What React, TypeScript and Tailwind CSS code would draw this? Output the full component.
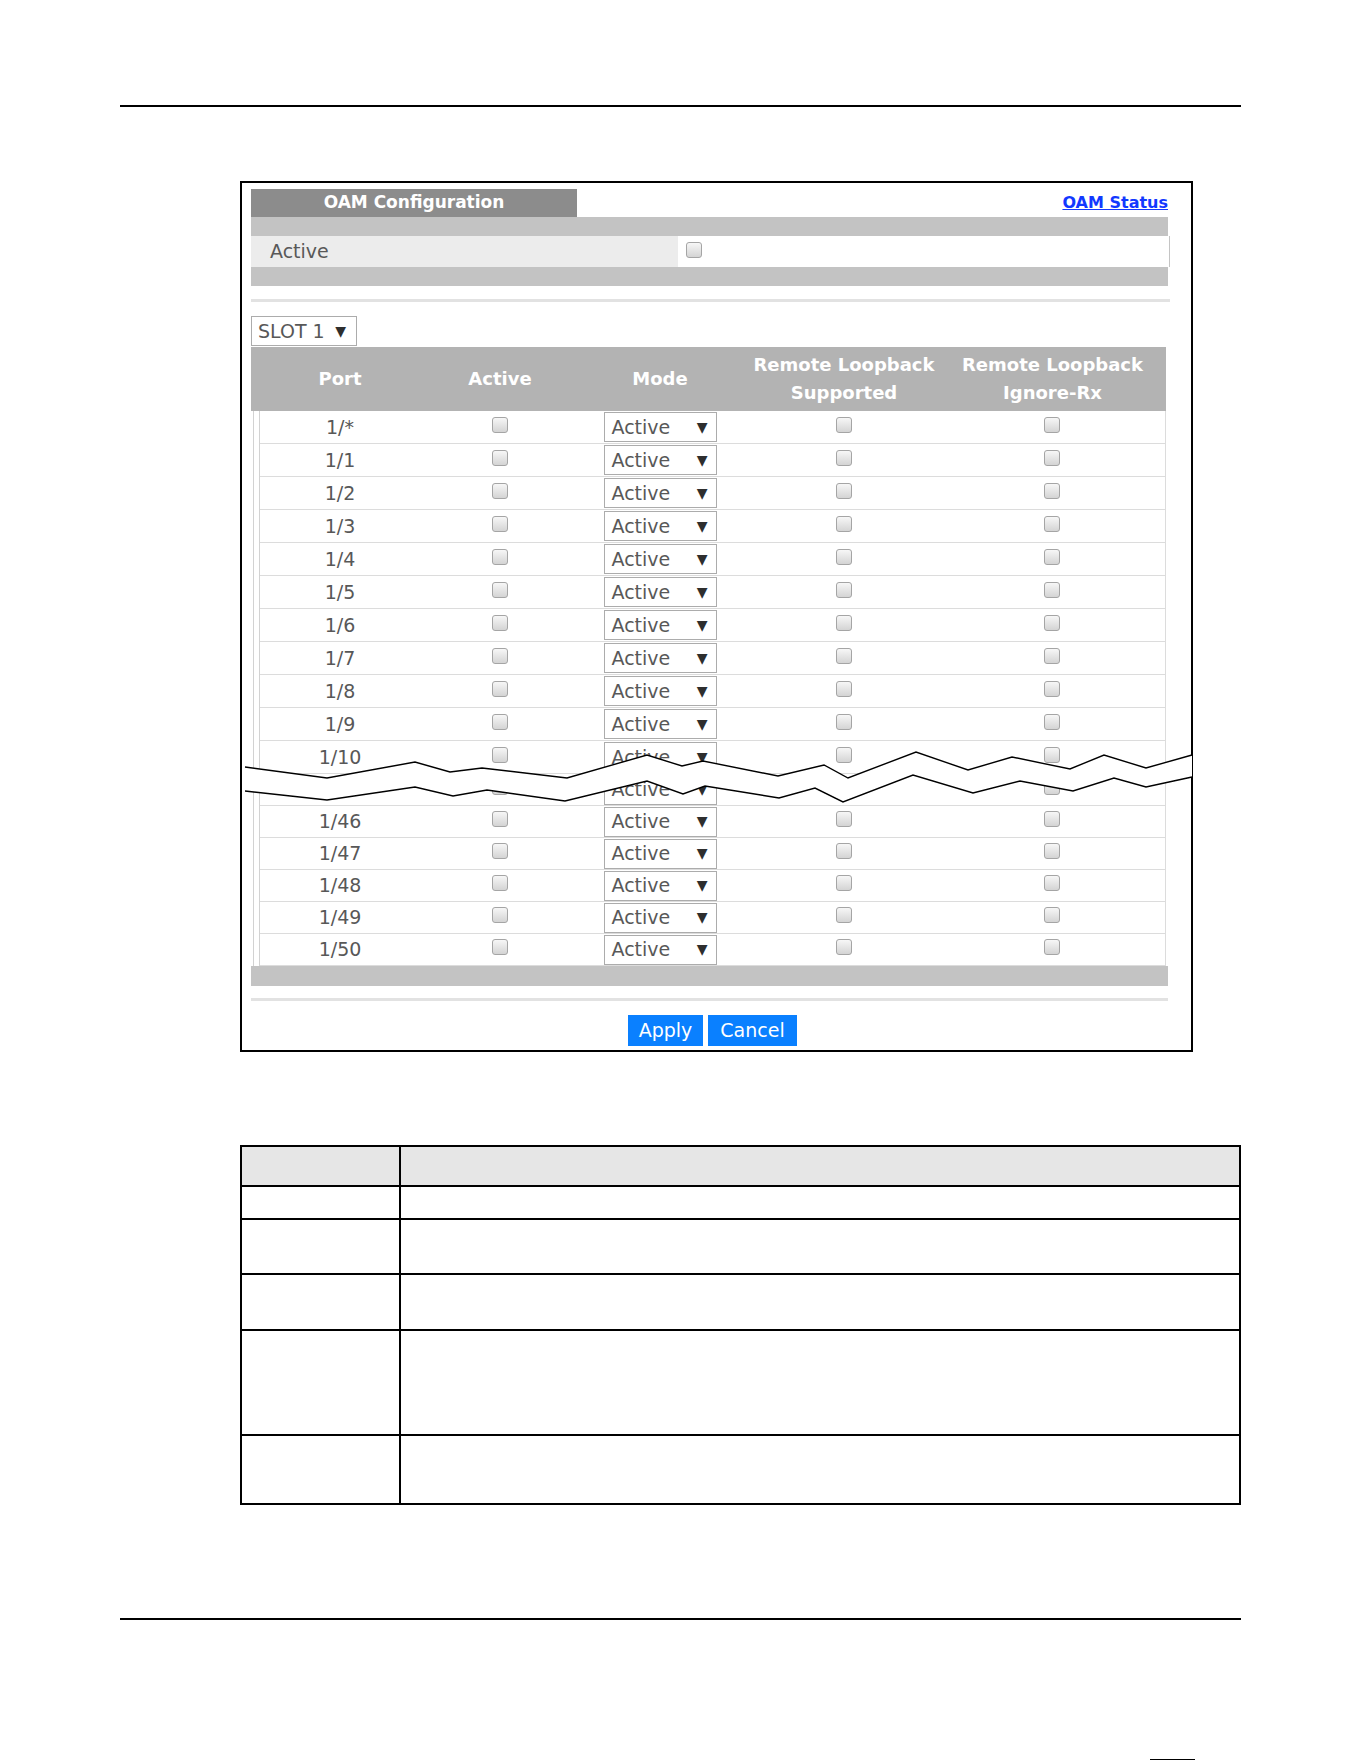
import React from 'react';

const ports = ['1/*', '1/1', '1/2', '1/3', '1/4', '1/5', '1/6', '1/7', '1/8', '1/9', '1/10', '1/45', '1/46', '1/47', '1/48', '1/49', '1/50'];

// break marker drawn across the port list
const upper: [number, number][] = [
  [245, 767], [327, 778], [415, 762], [450, 772], [482, 768], [567, 778], [647, 755], [682, 766], [703, 761],
  [778, 776], [824, 765], [848, 778], [916, 752], [968, 770], [1012, 757], [1070, 769], [1104, 755], [1146, 768], [1192, 755],
];
const lower: [number, number][] = [
  [245, 791], [327, 800], [415, 787], [453, 796], [487, 790], [565, 801], [647, 781], [683, 794], [705, 786],
  [779, 798], [815, 788], [843, 802], [913, 775], [973, 793], [1020, 781], [1073, 791], [1114, 778], [1146, 787], [1192, 777],
];
const pts = (list: [number, number][]) => list.map(([x, y]) => `${x},${y}`).join(' ');

const CheckBox: React.FC<{ className?: string }> = ({ className = '' }) => (
  <span
    className={`block w-[16px] h-[16px] rounded-[3px] border border-[#a5a5a5] bg-gradient-to-b from-[#f7f7f7] to-[#d4d4d4] ${className}`}
  />
);

const ModeSelect: React.FC = () => (
  <div className="flex items-center justify-between w-[113px] h-[30px] border border-[#acacac] bg-white pl-[7px] pr-[8px]">
    <span>Active</span>
    <span className="text-[14px] text-[#2e2e2e]">▼</span>
  </div>
);

const PortRow: React.FC<{ port: string; tall: boolean }> = ({ port, tall }) => (
  <div className={`flex items-center border-b border-r border-[#dcdcdc] ${tall ? 'h-[33px]' : 'h-[32px]'}`}>
    <div className="w-[169px] pr-[9px] text-center">{port}</div>
    <div className="w-[142px] flex justify-center">
      <CheckBox className="mb-[5px]" />
    </div>
    <div className="w-[178px] flex justify-center">
      <ModeSelect />
    </div>
    <div className="w-[190px] flex justify-center">
      <CheckBox className="mb-[5px]" />
    </div>
    <div className="w-[226px] flex justify-center">
      <CheckBox className="mb-[5px]" />
    </div>
  </div>
);

export default function App() {
  return (
    <div className="relative w-[1361px] h-[1761px] bg-white pt-[105px] font-['DejaVu_Sans',sans-serif] text-[19px] text-[#585858]">
      <div className="ml-[120px] w-[1121px] h-[2px] bg-black" />

      {/* OAM configuration screen */}
      <div className="mt-[74px] ml-[240px] w-[953px] h-[871px] border-2 border-black pl-[9px] pt-[6px]">
        <div className="flex items-end justify-between w-[919px] h-[28px]">
          <div className="w-[326px] h-[28px] bg-[#8c8c8c] flex items-center justify-center text-white font-bold text-[17px]">
            OAM Configuration
          </div>
          <a href="#" className="mb-[2px] mr-[2px] text-[16px] font-bold text-[#1238ff] underline">
            OAM Status
          </a>
        </div>
        <div className="w-[917px] h-[19px] bg-[#c3c3c3]" />
        <div className="flex w-[919px] h-[31px]">
          <div className="w-[427px] bg-[#ececec] flex items-center pl-[19px]">Active</div>
          <div className="flex-1 flex items-center pl-[8px] border-r border-[#c4c4c4]">
            <CheckBox className="mb-[3px]" />
          </div>
        </div>
        <div className="w-[917px] h-[19px] bg-[#c3c3c3]" />
        <div className="mt-[13px] w-[919px] h-[3px] bg-[#e2e2e2]" />

        <div className="mt-[14px] flex items-center justify-between w-[106px] h-[30px] border border-[#acacac] pl-[6px] pr-[10px]">
          <span>SLOT 1</span>
          <span className="text-[14px] text-[#2e2e2e]">▼</span>
        </div>

        {/* port table */}
        <div className="mt-[1px] w-[915px] h-[64px] bg-[#b3b3b3] flex items-center text-white font-bold text-[18px] leading-[28px]">
          <div className="w-[178px] text-center">Port</div>
          <div className="w-[142px] text-center">Active</div>
          <div className="w-[178px] text-center">Mode</div>
          <div className="w-[190px] text-center whitespace-nowrap">
            Remote Loopback
            <br />
            Supported
          </div>
          <div className="w-[227px] text-center whitespace-nowrap">
            Remote Loopback
            <br />
            Ignore-Rx
          </div>
        </div>
        <div className="flex">
          <div className="ml-[2px] w-[6px] border-l border-[#d2d2d2]" />
          <div className="w-[907px] border-l border-[#d2d2d2]">
            {ports.map((p, i) => (
              <PortRow key={p} port={p} tall={i < 11} />
            ))}
          </div>
        </div>
        <div className="w-[917px] h-[20px] bg-[#c3c3c3]" />
        <div className="mt-[12px] w-[917px] h-[3px] bg-[#e2e2e2]" />

        <div className="mt-[14px] w-[919px] flex justify-center gap-[5px] pl-[4px]">
          <button className="w-[75px] h-[31px] bg-[#0a80ff] text-white text-[19px]">Apply</button>
          <button className="w-[89px] h-[31px] bg-[#0a80ff] text-white text-[19px]">Cancel</button>
        </div>
      </div>

      {/* field description table */}
      <div className="mt-[93px] ml-[240px] w-[1001px] border-2 border-black">
        <div className="flex h-[38px] bg-[#e6e6e6]">
          <div className="w-[159px] border-r-2 border-black" />
          <div className="flex-1" />
        </div>
        {[33, 55, 56, 105, 69].map((h, i) => (
          <div key={i} className="flex border-t-2 border-black" style={{ height: h }}>
            <div className="w-[159px] border-r-2 border-black" />
            <div className="flex-1" />
          </div>
        ))}
      </div>

      <div className="mt-[113px] ml-[120px] w-[1121px] h-[2px] bg-black" />
      <div className="mt-[139px] ml-[1150px] w-[45px] h-[1px] bg-black" />

      <svg
        className="absolute left-[240px] top-[745px] w-[955px] h-[65px]"
        viewBox="240 745 955 65"
        fill="none"
      >
        <polygon points={`${pts(upper)} ${pts([...lower].reverse())}`} fill="#fff" />
        <polyline points={pts(upper)} stroke="#000" strokeWidth="1.4" />
        <polyline points={pts(lower)} stroke="#000" strokeWidth="1.4" />
      </svg>
    </div>
  );
}
